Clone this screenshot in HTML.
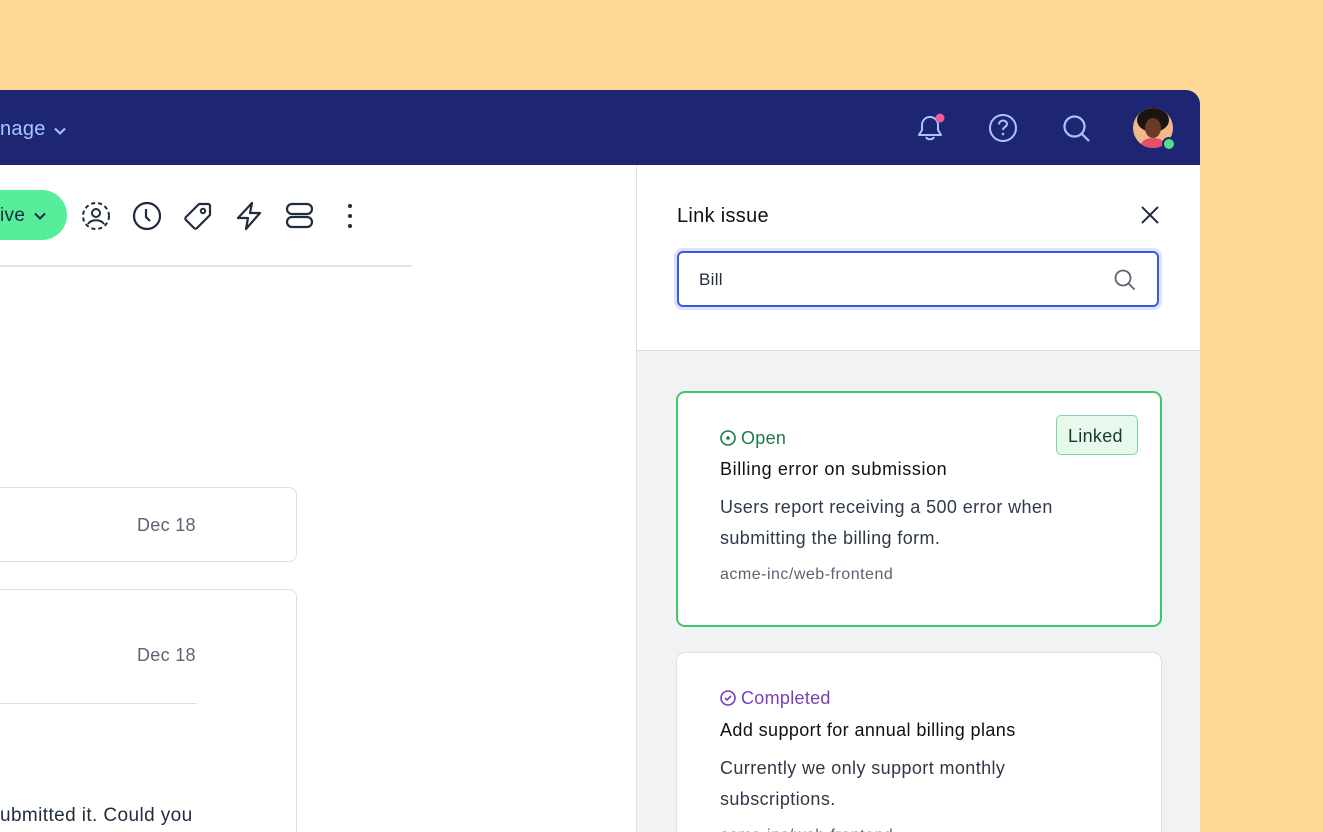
<!DOCTYPE html>
<html><head><style>
*{margin:0;padding:0;box-sizing:border-box}
html,body{width:1323px;height:832px;overflow:hidden}
body{background:#FFD996;font-family:"Liberation Sans",sans-serif;position:relative}
.win{position:absolute;left:0;top:90px;width:1200px;height:742px;background:#fff;border-top-right-radius:14px;overflow:hidden}
.hdr{position:absolute;left:0;top:0;width:1200px;height:75px;background:#1E2673}
.a{position:absolute}
.t{position:absolute;white-space:nowrap;letter-spacing:0.3px}
svg{position:absolute;overflow:visible}
</style></head><body>
<div class="win">
 <div class="hdr">
  <div class="t" style="left:0;top:28px;font-size:20px;color:#A9C4FF">nage</div>
  <svg style="left:54px;top:37px" width="12" height="8"><path d="M1 1.5l5 5 5-5" stroke="#A9C4FF" stroke-width="2" fill="none"/></svg>
  <svg style="left:915px;top:23px" width="30" height="30"><path d="M15 4c-5 0-8 4-8 8v5l-3 5h22l-3-5v-5c0-4-3-8-8-8zM11 24c1 3 7 3 8 0" stroke="#A9C4FF" stroke-width="2" fill="none" stroke-linejoin="round"/><circle cx="25" cy="5" r="4.5" fill="#F05A9A"/></svg>
  <svg style="left:988px;top:23px" width="30" height="30"><circle cx="15" cy="15" r="13" stroke="#A9C4FF" stroke-width="2" fill="none"/><path d="M11 11.5c0-2.5 2-4 4-4s4 1.5 4 3.5c0 3-4 3-4 6" stroke="#A9C4FF" stroke-width="2" fill="none"/><circle cx="15" cy="21" r="1.3" fill="#A9C4FF"/></svg>
  <svg style="left:1062px;top:24px" width="30" height="30"><circle cx="12.5" cy="12.5" r="10" stroke="#A9C4FF" stroke-width="2.2" fill="none"/><path d="M20 20l7 7" stroke="#A9C4FF" stroke-width="2.2"/></svg>
  <div class="a" style="left:1133px;top:18px;width:40px;height:40px;border-radius:50%;background:#F2B88A;overflow:hidden">
   <div class="a" style="left:4px;top:0;width:32px;height:24px;border-radius:50%;background:#1a1412"></div>
   <div class="a" style="left:12px;top:10px;width:16px;height:20px;border-radius:50%;background:#6b3a24"></div>
   <div class="a" style="left:8px;top:30px;width:24px;height:14px;border-radius:50%;background:#E0506A"></div>
  </div>
  <div class="a" style="left:1162px;top:47px;width:14px;height:14px;border-radius:50%;background:#4FDE8C;border:2px solid #1E2673"></div>
 </div>
 <div class="a" style="left:-40px;top:100px;width:107px;height:50px;border-radius:25px;background:#56EE9A"></div>
 <div class="t" style="left:0;top:115px;font-size:19px;color:#1a2b3c">ive</div>
 <svg style="left:34px;top:122px" width="12" height="8"><path d="M1 1.5l5 5 5-5" stroke="#1a2b3c" stroke-width="2" fill="none"/></svg>
 <svg style="left:81px;top:111px" width="30" height="30"><circle cx="15" cy="15" r="13" stroke="#1F2D3D" stroke-width="2" stroke-dasharray="4 3" fill="none"/><circle cx="15" cy="12" r="4" stroke="#1F2D3D" stroke-width="2" fill="none"/><path d="M7 23c3-5 13-5 16 0" stroke="#1F2D3D" stroke-width="2" fill="none"/></svg>
 <svg style="left:132px;top:111px" width="30" height="30"><circle cx="15" cy="15" r="13" stroke="#1F2D3D" stroke-width="2.2" fill="none"/><path d="M14 8v8l4 4" stroke="#1F2D3D" stroke-width="2.2" fill="none"/></svg>
 <svg style="left:183px;top:111px" width="30" height="30"><path d="M16 3h9a2 2 0 0 1 2 2v9L14 27a2 2 0 0 1-3 0l-8-8a2 2 0 0 1 0-3z" stroke="#1F2D3D" stroke-width="2.2" fill="none" stroke-linejoin="round"/><circle cx="20" cy="10" r="2.2" stroke="#1F2D3D" stroke-width="2" fill="none"/></svg>
 <svg style="left:234px;top:111px" width="30" height="30"><path d="M18 2L4 17h10l-2 11 14-16H16z" stroke="#1F2D3D" stroke-width="2.2" fill="none" stroke-linejoin="round"/></svg>
 <svg style="left:286px;top:112px" width="28" height="28"><rect x="1" y="2" width="25" height="10" rx="5" stroke="#1F2D3D" stroke-width="2.2" fill="none"/><rect x="1" y="15" width="25" height="10" rx="5" stroke="#1F2D3D" stroke-width="2.2" fill="none"/></svg>
 <div class="a" style="left:348px;top:114px;width:4px;height:4px;border-radius:2px;background:#1F2D3D;box-shadow:0 10px 0 #1F2D3D,0 20px 0 #1F2D3D"></div>
 <div class="a" style="left:0;top:175px;width:412px;height:2px;background:#E3E5E8"></div>
 <div class="a" style="left:-20px;top:397px;width:317px;height:75px;border:1px solid #DDE0E4;border-radius:8px"></div>
 <div class="t" style="left:137px;top:425px;font-size:18px;color:#5A6472">Dec 18</div>
 <div class="a" style="left:-20px;top:499px;width:317px;height:300px;border:1px solid #DDE0E4;border-radius:8px"></div>
 <div class="t" style="left:137px;top:555px;font-size:18px;color:#5A6472">Dec 18</div>
 <div class="a" style="left:0;top:613px;width:197px;height:1px;background:#DDE0E4"></div>
 <div class="t" style="left:0;top:715px;font-size:19px;color:#1F2D3D;letter-spacing:0.4px">ubmitted it. Could you</div>
 <div class="a" style="left:636px;top:75px;width:564px;height:700px;background:#F1F2F4;border-left:1px solid #DDE0E4"></div>
 <div class="a" style="left:637px;top:75px;width:563px;height:186px;background:#fff;border-bottom:1px solid #D6D9DD"></div>
 <div class="t" style="left:677px;top:115px;font-size:20px;color:#111">Link issue</div>
 <svg style="left:1141px;top:116px" width="18" height="18"><path d="M1 1l16 16M17 1L1 17" stroke="#1F2D3D" stroke-width="2"/></svg>
 <div class="a" style="left:677px;top:161px;width:482px;height:56px;border:2px solid #3D5BD9;border-radius:6px;box-shadow:0 0 0 3px #DCE4FB;background:#fff"></div>
 <div class="t" style="left:699px;top:180px;font-size:17px;color:#1F2D3D">Bill</div>
 <svg style="left:1114px;top:179px" width="22" height="22"><circle cx="9" cy="9" r="7.5" stroke="#5A6472" stroke-width="1.8" fill="none"/><path d="M14.5 14.5l6 6" stroke="#5A6472" stroke-width="1.8"/></svg>
 <div class="a" style="left:676px;top:301px;width:486px;height:236px;background:#fff;border:2px solid #3EC66F;border-radius:9px"></div>
 <svg style="left:720px;top:340px" width="16" height="16"><circle cx="8" cy="8" r="7" stroke="#1E7A45" stroke-width="1.6" fill="none"/><circle cx="8" cy="8" r="1.8" fill="#1E7A45"/></svg>
 <div class="t" style="left:741px;top:338px;font-size:18px;color:#1E7A45">Open</div>
 <div class="a" style="left:1056px;top:325px;width:82px;height:40px;background:#E6F9EC;border:1.5px solid #7DDA9E;border-radius:5px"></div>
 <div class="t" style="left:1068px;top:336px;font-size:18px;color:#143d26">Linked</div>
 <div class="t" style="left:720px;top:369px;font-size:18px;color:#111;letter-spacing:0.6px">Billing error on submission</div>
 <div class="t" style="left:720px;top:402px;font-size:18px;color:#2F3A48;line-height:31px;letter-spacing:0.4px">Users report receiving a 500 error when<br>submitting the billing form.</div>
 <div class="t" style="left:720px;top:476px;font-size:16px;color:#5A6472;letter-spacing:0.5px">acme-inc/web-frontend</div>
 <div class="a" style="left:676px;top:562px;width:486px;height:240px;background:#fff;border:1px solid #DDE0E4;border-radius:9px"></div>
 <svg style="left:720px;top:600px" width="16" height="16"><circle cx="8" cy="8" r="7" stroke="#7A3DB8" stroke-width="1.6" fill="none"/><path d="M5 8l2 2 4-4" stroke="#7A3DB8" stroke-width="1.6" fill="none"/></svg>
 <div class="t" style="left:741px;top:598px;font-size:18px;color:#7A3DB8">Completed</div>
 <div class="t" style="left:720px;top:630px;font-size:18px;color:#111;letter-spacing:0.4px">Add support for annual billing plans</div>
 <div class="t" style="left:720px;top:663px;font-size:18px;color:#2F3A48;line-height:31px;letter-spacing:0.4px">Currently we only support monthly<br>subscriptions.</div>
 <div class="t" style="left:720px;top:737px;font-size:16px;color:#5A6472;letter-spacing:0.5px">acme-inc/web-frontend</div>
</div>
</body></html>
